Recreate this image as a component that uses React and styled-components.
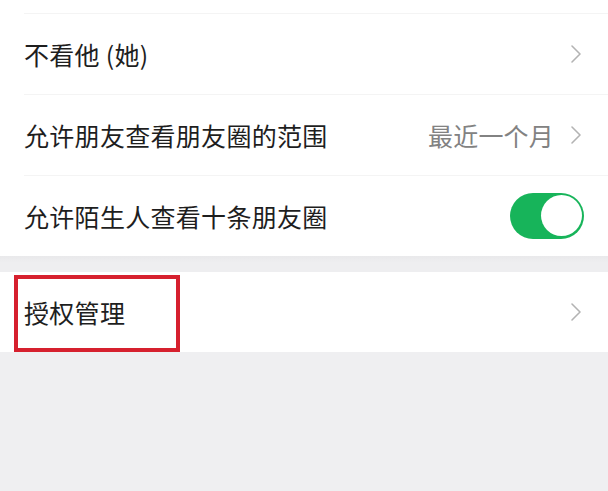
import React from "react";
import styled, { createGlobalStyle } from "styled-components";

const Global = createGlobalStyle`
  html, body {
    margin: 0;
    padding: 0;
    background: #efeff1;
    font-family: "Noto Sans CJK SC", "Noto Sans", sans-serif;
  }
`;

const Page = styled.div`
  width: 608px;
  min-height: 491px;
  background: #efeff1;
`;

const Group = styled.div`
  background: #fff;
  padding-top: ${({ top }) => top || 0}px;
  margin-bottom: ${({ gap }) => gap || 0}px;
`;

const Gap = styled.div`
  height: 16px;
  background: linear-gradient(#e9e9eb, #eeeef0 40%);
`;

const Row = styled.div`
  position: relative;
  height: ${({ h }) => h || 81}px;
  display: flex;
  align-items: center;
  padding: 0 26px 0 24px;
  box-sizing: border-box;
  &::before {
    content: "";
    display: ${({ line }) => (line ? "block" : "none")};
    position: absolute;
    top: 0;
    left: 24px;
    right: 0;
    height: 1px;
    background: #f4f4f4;
  }
`;

const Label = styled.span`
  flex: 1;
  font-size: 25px;
  letter-spacing: 0.3px;
  color: #1e1e1e;
`;

const Value = styled.span`
  font-size: 25px;
  letter-spacing: 0.2px;
  color: #828282;
  margin-right: 16px;
`;

const Switch = styled.div`
  width: 74px;
  height: 46px;
  border-radius: 23px;
  background: #17b45a;
  display: flex;
  align-items: center;
  justify-content: flex-end;
  padding: 0 2px;
  box-sizing: border-box;
  margin-right: -2px;
`;

const Knob = styled.div`
  width: 41px;
  height: 41px;
  border-radius: 50%;
  background: #fff;
`;

const Mark = styled.div`
  position: absolute;
  left: 14px;
  top: 3px;
  width: 166px;
  height: 77px;
  border: 4px solid #d6202e;
  box-sizing: border-box;
`;

const Chevron = () => (
  <svg width="12" height="20" viewBox="0 0 12 20">
    <polyline
      points="2,2 10,10 2,18"
      fill="none"
      stroke="#b3b3b3"
      strokeWidth="1.6"
      strokeLinecap="round"
      strokeLinejoin="round"
    />
  </svg>
);

export default function App() {
  return (
    <Page>
      <Global />
      <Group top={13}>
        <Row line>
          <Label>不看他 (她)</Label>
          <Chevron />
        </Row>
        <Row line>
          <Label>允许朋友查看朋友圈的范围</Label>
          <Value>最近一个月</Value>
          <Chevron />
        </Row>
        <Row line>
          <Label>允许陌生人查看十条朋友圈</Label>
          <Switch>
            <Knob />
          </Switch>
        </Row>
      </Group>
      <Gap />
      <Group>
        <Row h={80}>
          <Label>授权管理</Label>
          <Chevron />
          <Mark />
        </Row>
      </Group>
    </Page>
  );
}
